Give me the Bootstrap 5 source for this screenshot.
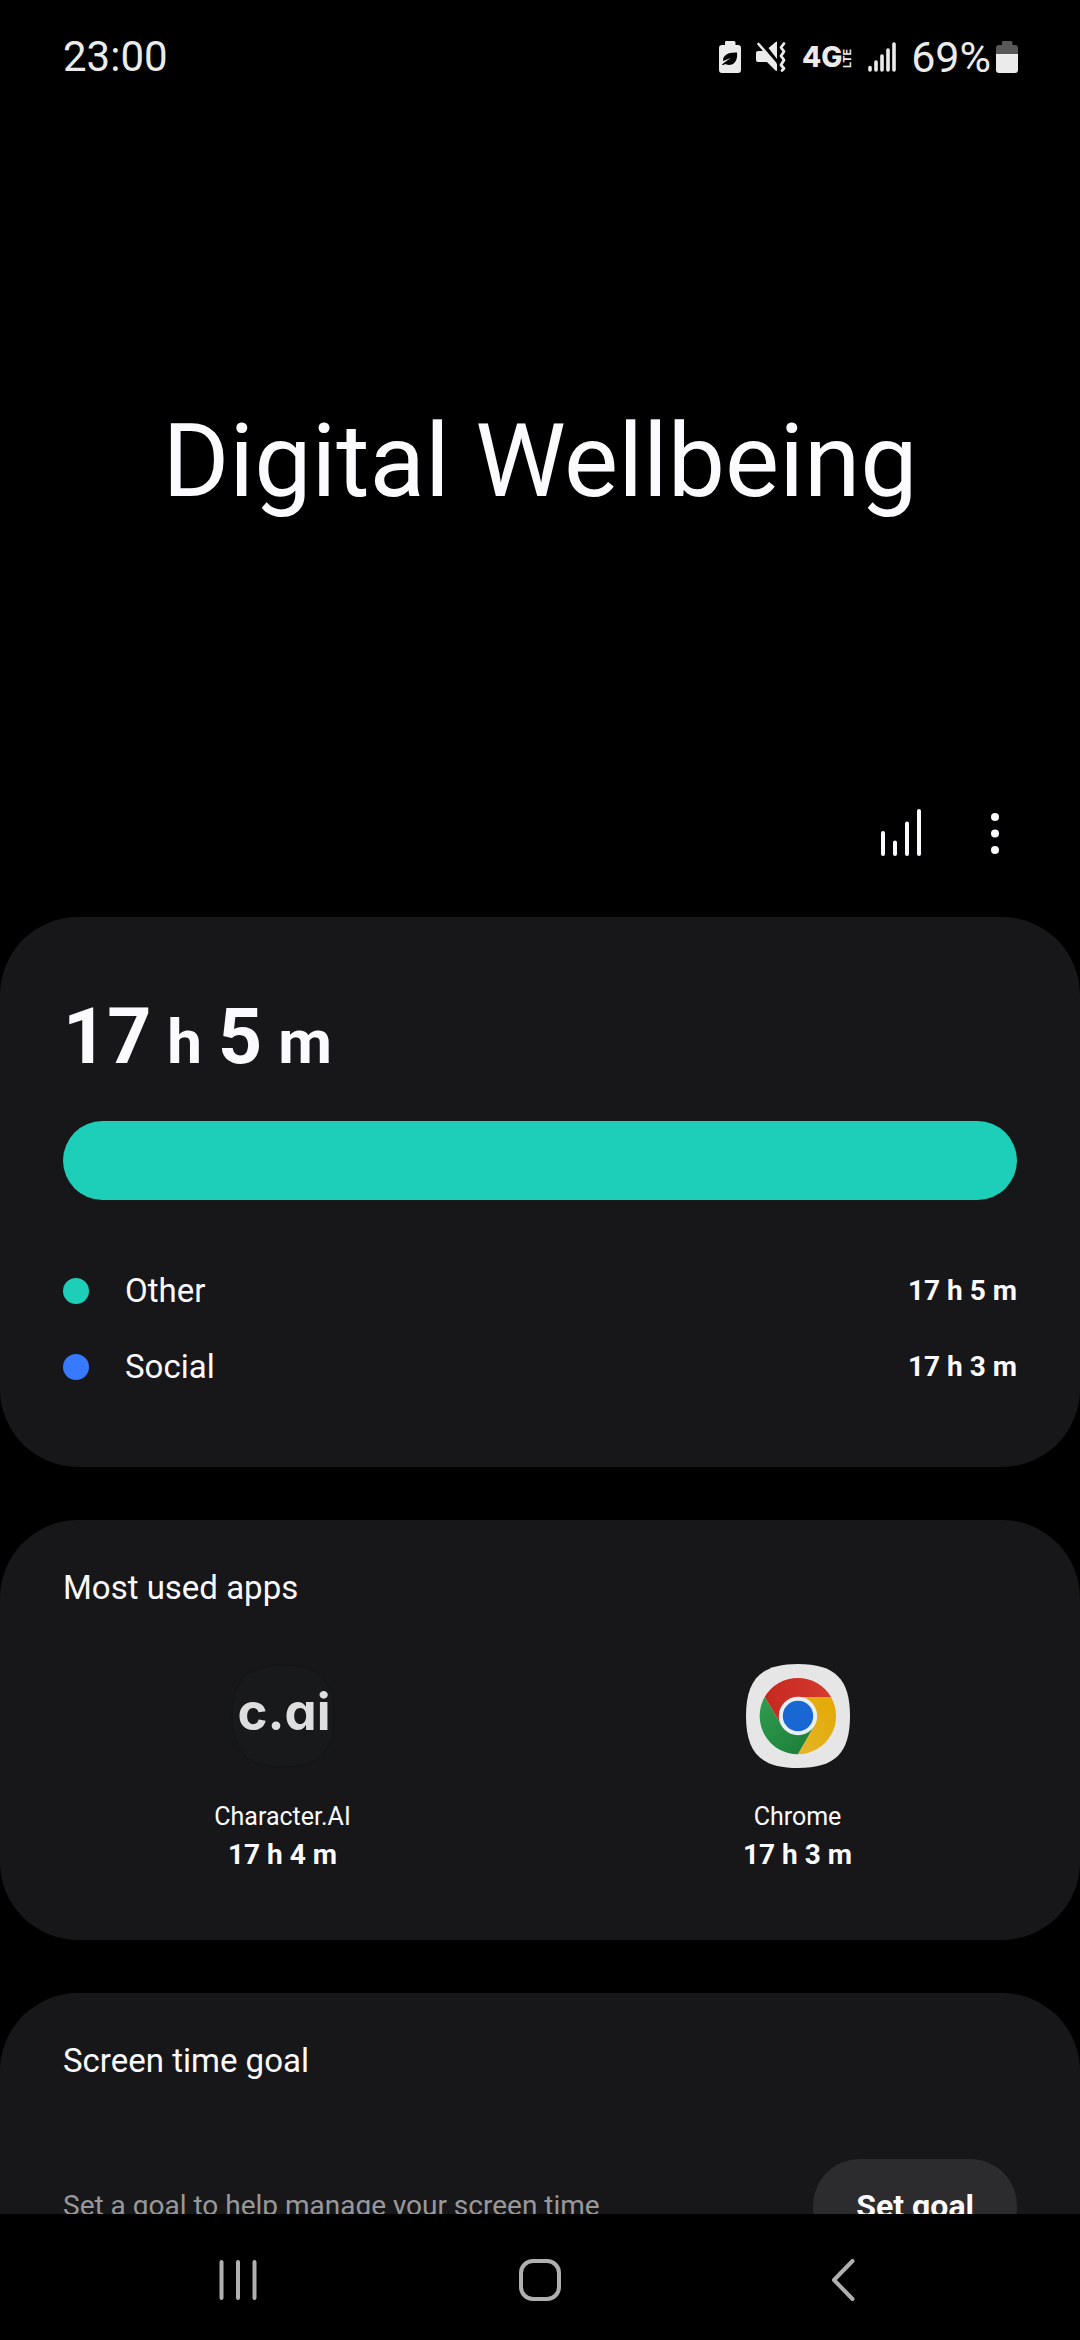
<!DOCTYPE html>
<html lang="en" data-bs-theme="dark">
<head>
<meta charset="utf-8">
<meta name="viewport" content="width=device-width, initial-scale=1">
<title>Digital Wellbeing</title>
<link href="https://cdn.jsdelivr.net/npm/bootstrap@5.3.0/dist/css/bootstrap.min.css" rel="stylesheet">
<style>
  :root {
    --ink: #fafaff;
    --status: #ebebeb;
    --panel: #171719;
    --teal: #1dcfb8;
    --blue: #387aff;
    --side: 63px;
  }
  body { background: #000; color: var(--ink); font-family: Roboto, "Liberation Sans", sans-serif; }
  svg { display: block; flex-shrink: 0; }
  .status-bar { height: 114px; padding: 0 62px 0 var(--side); color: var(--status); font-size: 42px; line-height: 48px; }
  .status-icons { gap: 15px; }
  .battery-level { gap: 5px; font-size: 43px; }
  .scroller { min-height: 0; scrollbar-width: none; }
  .scroller::-webkit-scrollbar { display: none; }
  .page-title { margin: 287px 0 272px; font-size: 102px; line-height: 120px; font-weight: 400; color: var(--ink); }
  .tool-row { padding-right: 38px; margin-bottom: 44px; }
  .tool-btn { width: 94px; height: 80px; color: var(--ink); border-radius: 40px; }
  .panel { background: var(--panel); border-radius: 78px; padding: 48px var(--side); }
  .panels { gap: 53px; }
  .panel-total { padding-top: 74px; padding-bottom: 62px; }
  .total-time { gap: 16px; font-size: 77px; line-height: 92px; font-weight: 700; margin-bottom: 33px; }
  .total-time .unit { font-size: 62px; }
  .usage-bar { height: 79px; border-radius: 40px; background: transparent; }
  .usage-bar .progress-bar { background: var(--teal); }
  .legend-list { margin-top: 53px; }
  .legend-list li { height: 76px; font-size: 33px; }
  .dot { width: 26px; height: 26px; border-radius: 50%; margin-right: 36px; }
  .dot-other { background: var(--teal); }
  .dot-social { background: var(--blue); }
  .time { font-size: 28px; line-height: 38px; font-weight: 700; }
  .panel-title { font-size: 33px; line-height: 40px; font-weight: 400; margin: 0; color: var(--ink); }
  .panel-apps { padding-bottom: 66px; }
  .app-row { margin: 56px -38px 0; }
  .app-link { color: var(--ink); }
  .app-name { font-size: 25px; line-height: 38px; margin-top: 30px; }
  .goal-row { margin-top: 78px; }
  .goal-text { font-size: 28px; line-height: 38px; color: #98989b; }
  .goal-btn, .goal-btn:hover { background: #2c2c2e; color: var(--ink); border: 0; border-radius: 47px; padding: 28px 43px; font-size: 32px; line-height: 38px; font-weight: 700; }
  .nav-area { height: 126px; padding: 6px 86px 0 87px; background: #000; }
  .nav-key { color: #b0b0b0; }
</style>
</head>
<body>
<div class="vh-100 d-flex flex-column overflow-hidden">
  <header class="status-bar d-flex align-items-center justify-content-between flex-shrink-0">
    <span>23:00</span>
    <div class="status-icons d-flex align-items-center">
      <svg width="22" height="32" viewBox="0 0 22 32" role="img" aria-label="Power saving">
        <path fill="currentColor" d="M7 0h8a1.500 1.500 0 0 1 1.500 1.500V4H19a3 3 0 0 1 3 3v22a3 3 0 0 1-3 3H3a3 3 0 0 1-3-3V7a3 3 0 0 1 3-3h3V1.500A1.500 1.500 0 0 1 7 0z"/>
        <path fill="#000" d="M18 11.500c1 8-3 12.500-8 12.500-2 0-3-1-4-1-1 1-2 1-3 1 0-1 2-2 3-3l6-4-8 3c0-6 5-9 14-8.500z"/>
      </svg>
      <svg width="30" height="32" viewBox="0 0 30 32" role="img" aria-label="Vibrate">
        <path fill="currentColor" d="M0 12q0-2 2-2h7l12 13v6q0 1.500-1.500.5L11 21H2q-2 0-2-2zM12.500 7L20 .8q1-.8 1 .5V18z"/>
        <path fill="none" stroke="currentColor" stroke-width="2.600" stroke-linecap="round" d="M2.500 3L19 22"/>
        <path fill="none" stroke="currentColor" stroke-width="2.800" stroke-linecap="round" stroke-linejoin="round" d="M28 2.500l-3 4 3 4-3 4.500 3 4-3 5 3 3.500-2 2"/>
      </svg>
      <svg width="52" height="42" viewBox="0 0 52 42" fill="currentColor" role="img" aria-label="4G LTE">
        <text x="1" y="31" font-family="Inter, sans-serif" font-weight="800" font-size="28">4G</text>
        <text transform="translate(50 32) rotate(-90)" font-family="Inter, sans-serif" font-weight="700" font-size="11">LTE</text>
      </svg>
      <svg width="28" height="30" viewBox="4 0 28 30" role="img" aria-label="Signal">
        <path stroke="currentColor" stroke-width="3.600" stroke-linecap="round" d="M6 25.500v2.500M12 20v8M18 14v14M24 8v20M30 2v26"/>
      </svg>
      <div class="battery-level d-flex align-items-center">
        <span>69%</span>
        <svg width="22" height="32" viewBox="0 0 22 32" role="img" aria-label="Battery">
          <path fill="#585858" d="M7 0h8a1.500 1.500 0 0 1 1.500 1.500V4H19a3 3 0 0 1 3 3v6H0V7a3 3 0 0 1 3-3h3V1.500A1.500 1.500 0 0 1 7 0z"/>
          <path fill="currentColor" d="M0 13h22v16a3 3 0 0 1-3 3H3a3 3 0 0 1-3-3z"/>
        </svg>
      </div>
    </div>
  </header>

  <main class="scroller flex-grow-1 overflow-auto">
    <h1 class="page-title text-center">Digital Wellbeing</h1>
    <div class="tool-row d-flex justify-content-end">
      <button type="button" class="tool-btn btn p-0 border-0 d-flex align-items-center justify-content-center" aria-label="Weekly report">
        <svg width="40" height="48" viewBox="0 0 40 48"><path stroke="currentColor" stroke-width="4" stroke-linecap="round" d="M2 24v21M14 33.500v11.500M26 14.500v30.500M38 2v43"/></svg>
      </button>
      <button type="button" class="tool-btn btn p-0 border-0 d-flex align-items-center justify-content-center" aria-label="More options">
        <svg width="8" height="41" viewBox="0 0 8 41" fill="currentColor"><circle cx="4" cy="4" r="4"/><circle cx="4" cy="20.500" r="4"/><circle cx="4" cy="37" r="4"/></svg>
      </button>
    </div>

    <div class="panels d-flex flex-column">
      <section class="panel panel-total">
        <div class="total-time d-flex align-items-baseline"><span>17</span><span class="unit">h</span><span>5</span><span class="unit">m</span></div>
        <div class="usage-bar progress" role="progressbar" aria-label="Screen time today" aria-valuenow="100" aria-valuemin="0" aria-valuemax="100">
          <div class="progress-bar" style="width: 100%"></div>
        </div>
        <ul class="legend-list list-unstyled mb-0">
          <li class="d-flex align-items-center"><span class="dot dot-other"></span><span>Other</span><span class="time ms-auto">17 h 5 m</span></li>
          <li class="d-flex align-items-center"><span class="dot dot-social"></span><span>Social</span><span class="time ms-auto">17 h 3 m</span></li>
        </ul>
      </section>

      <section class="panel panel-apps">
        <h2 class="panel-title">Most used apps</h2>
        <div class="app-row row">
          <div class="col-6">
            <a href="#character-ai" class="app-link d-flex flex-column align-items-center text-decoration-none">
              <svg width="104" height="104" viewBox="0 0 104 104" role="img" aria-label="Character.AI icon">
                <path fill="#18191b" stroke="#131315" d="M52 1C88 1 103 16 103 52S88 103 52 103 1 88 1 52 16 1 52 1z"/>
                <text x="53" y="66" text-anchor="middle" font-family="Inter, sans-serif" font-weight="700" font-size="51" fill="#dedede" style="font-feature-settings: 'cv11' 1, 'ss07' 0">c.ai</text>
              </svg>
              <span class="app-name">Character.AI</span>
              <span class="time">17 h 4 m</span>
            </a>
          </div>
          <div class="col-6">
            <a href="#chrome" class="app-link d-flex flex-column align-items-center text-decoration-none">
              <svg width="104" height="104" viewBox="0 0 104 104" role="img" aria-label="Chrome icon">
                <defs>
                  <linearGradient id="red" x1="0" y1="0" x2="1" y2="0"><stop offset="0" stop-color="#c5281f"/><stop offset="1" stop-color="#d53b30"/></linearGradient>
                  <linearGradient id="green" x1="0" y1="0" x2="1" y2="1"><stop offset="0" stop-color="#309c4f"/><stop offset="1" stop-color="#1b7c38"/></linearGradient>
                  <linearGradient id="yellow" x1="0" y1="1" x2="1" y2="0"><stop offset="0" stop-color="#e4b52c"/><stop offset="1" stop-color="#e3a900"/></linearGradient>
                </defs>
                <path fill="#e6e6e6" d="M52 0C89 0 104 15 104 52S89 104 52 104 0 89 0 52 15 0 52 0z"/>
                <path fill="url(#red)" d="M18.700 33A38.300 38.300 0 0 1 85 33H52L35.500 61.500z"/>
                <path fill="url(#green)" d="M18.700 33A38.300 38.300 0 0 0 52 90.300L68.500 61.500 52 52 35.500 61.500z"/>
                <path fill="url(#yellow)" d="M85 33A38.300 38.300 0 0 1 52 90.300L68.500 61.500 52 33z"/>
                <circle cx="52" cy="52" r="19.200" fill="#e9eef4"/>
                <circle cx="52" cy="52" r="15.200" fill="#1967d2"/>
              </svg>
              <span class="app-name">Chrome</span>
              <span class="time">17 h 3 m</span>
            </a>
          </div>
        </div>
      </section>

      <section class="panel">
        <h2 class="panel-title">Screen time goal</h2>
        <div class="goal-row d-flex align-items-center justify-content-between">
          <span class="goal-text">Set a goal to help manage your screen time</span>
          <button type="button" class="goal-btn btn flex-shrink-0">Set goal</button>
        </div>
      </section>
    </div>
  </main>

  <nav class="nav-area d-flex align-items-center flex-shrink-0" aria-label="System navigation">
    <button type="button" class="nav-key btn border-0 flex-fill w-100 d-flex justify-content-center" aria-label="Recent apps">
      <svg width="38" height="42" viewBox="0 0 38 42"><path stroke="currentColor" stroke-width="4" stroke-linecap="round" d="M2.500 3v36M19 3v36M35.500 3v36"/></svg>
    </button>
    <button type="button" class="nav-key btn border-0 flex-fill w-100 d-flex justify-content-center" aria-label="Home">
      <svg width="42" height="42" viewBox="0 0 42 42"><rect x="2" y="2" width="38" height="38" rx="12" fill="none" stroke="currentColor" stroke-width="4"/></svg>
    </button>
    <button type="button" class="nav-key btn border-0 flex-fill w-100 d-flex justify-content-center" aria-label="Back">
      <svg width="24" height="42" viewBox="0 0 24 42"><path fill="none" stroke="currentColor" stroke-width="4" stroke-linecap="round" stroke-linejoin="round" d="M21.500 2L3 21l18.500 19"/></svg>
    </button>
  </nav>
</div>
<script src="https://cdn.jsdelivr.net/npm/bootstrap@5.3.0/dist/js/bootstrap.bundle.min.js"></script>
</body>
</html>
